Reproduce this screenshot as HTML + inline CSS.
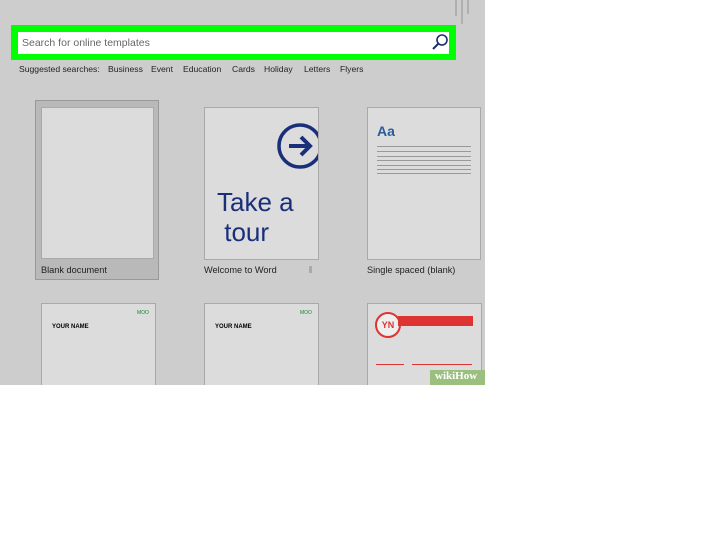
<!DOCTYPE html><html><head><style>
body{margin:0;width:728px;height:546px;background:#fff;font-family:"Liberation Sans",sans-serif;position:relative;overflow:hidden}
.g{position:absolute;left:0;top:0;width:485px;height:385px;background:#cdcdcd;overflow:hidden}
.a{position:absolute}
.pg{position:absolute;background:#dcdcdc;border:1px solid #a9a9a9}
.lbl{position:absolute;font-size:9.2px;color:#222}
.ln{position:absolute;height:1px;background:#999}
.s{position:absolute;top:64px;font-size:8.6px;color:#222}
</style></head><body><div class="g">
<div class="a" style="left:455px;top:0;width:2px;height:16px;background:#b0b0b0"></div>
<div class="a" style="left:461px;top:0;width:2px;height:24px;background:#b0b0b0"></div>
<div class="a" style="left:467px;top:0;width:2px;height:14px;background:#b0b0b0"></div>
<div class="a" style="left:11px;top:25px;width:445px;height:35px;background:#00ff00"></div>
<div class="a" style="left:18px;top:32px;width:431px;height:22px;background:#fff"></div>
<div class="a" style="left:22px;top:37px;font-size:10.5px;color:#666">Search for online templates</div>
<svg class="a" style="left:431px;top:33px" width="18" height="19"><circle cx="11" cy="7" r="5" fill="none" stroke="#1a2f6e" stroke-width="1.6"/><line x1="7.5" y1="10.5" x2="2" y2="16" stroke="#1a2f6e" stroke-width="2"/></svg>
<div class="s" style="left:19px">Suggested searches:</div>
<div class="s" style="left:108px">Business</div>
<div class="s" style="left:151px">Event</div>
<div class="s" style="left:183px">Education</div>
<div class="s" style="left:232px">Cards</div>
<div class="s" style="left:264px">Holiday</div>
<div class="s" style="left:304px">Letters</div>
<div class="s" style="left:340px">Flyers</div>

<div class="a" style="left:35px;top:100px;width:124px;height:180px;background:#b9b9b9;border:1px solid #999;box-sizing:border-box"></div>
<div class="pg" style="left:41px;top:107px;width:111px;height:150px"></div>
<div class="lbl" style="left:41px;top:265px">Blank document</div>

<div class="pg" style="left:204px;top:107px;width:113px;height:151px;overflow:hidden">
<svg class="a" style="left:70px;top:13px" width="50" height="50"><circle cx="25" cy="25" r="21" fill="none" stroke="#1a2f7a" stroke-width="3.5"/><path d="M14 25H34M26 16L35 25L26 34" fill="none" stroke="#1a2f7a" stroke-width="4"/></svg>
<div class="a" style="left:12px;top:79px;font-size:26px;color:#1a2f7a;line-height:30px">Take a<br>&nbsp;tour</div></div>
<div class="lbl" style="left:204px;top:265px">Welcome to Word</div>
<div class="a" style="left:309px;top:266px;width:3px;height:7px;background:#aaa"></div>

<div class="pg" style="left:367px;top:107px;width:112px;height:151px">
<div class="a" style="left:9px;top:15px;font-size:14px;font-weight:bold;color:#2b5a9a">Aa</div>
<div class="ln" style="left:9px;top:38px;width:94px;box-shadow:0 5px #999,0 10px #999,0 14px #999,0 19px #999,0 23px #999,0 27px #999"></div></div>
<div class="lbl" style="left:367px;top:265px">Single spaced (blank)</div>

<div class="pg" style="left:41px;top:303px;width:113px;height:90px"><div class="a" style="left:10px;top:20px;font-size:6px;font-weight:bold">YOUR NAME</div><div class="a" style="left:95px;top:6px;font-size:5px;color:#183">MOO</div></div>
<div class="pg" style="left:204px;top:303px;width:113px;height:90px"><div class="a" style="left:10px;top:20px;font-size:6px;font-weight:bold">YOUR NAME</div><div class="a" style="left:95px;top:6px;font-size:5px;color:#183">MOO</div></div>
<div class="pg" style="left:367px;top:303px;width:113px;height:90px">
<div class="a" style="left:7px;top:8px;width:22px;height:22px;border:2px solid #d33;border-radius:50%;background:#eee;color:#d33;font-size:9px;font-weight:bold;line-height:22px;text-align:center">YN</div>
<div class="a" style="left:30px;top:12px;width:75px;height:10px;background:#d33"></div>
<div class="a" style="left:8px;top:60px;width:28px;height:1px;background:#d33"></div>
<div class="a" style="left:44px;top:60px;width:60px;height:1px;background:#d33"></div></div>
<div class="a" style="left:430px;top:370px;width:55px;height:15px;background:#9bbf7f;color:#fff;font-size:11px;font-weight:bold;font-family:'Liberation Serif',serif;padding-left:5px">wikiHow</div>
</div></body></html>
